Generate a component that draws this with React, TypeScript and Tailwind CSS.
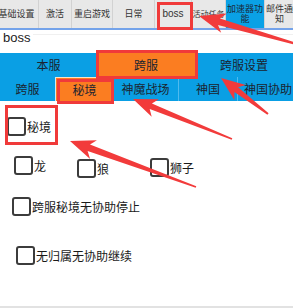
import React from 'react';

type Pt = [number, number];

// builds a tapered annotation arrow polygon from tip to tail
const arrowPoints = (tip: Pt, tail: Pt, headLen = 26, headW = 20, shaftW = 7, tailW = 2) => {
  const dx = tail[0] - tip[0];
  const dy = tail[1] - tip[1];
  const len = Math.hypot(dx, dy);
  const ux = dx / len;
  const uy = dy / len;
  const nx = -uy;
  const ny = ux;
  const bx = tip[0] + ux * headLen;
  const by = tip[1] + uy * headLen;
  const sx = tip[0] + ux * headLen * 0.8;
  const sy = tip[1] + uy * headLen * 0.8;
  const pts: Pt[] = [
    tip,
    [bx + (nx * headW) / 2, by + (ny * headW) / 2],
    [sx + (nx * shaftW) / 2, sy + (ny * shaftW) / 2],
    [tail[0] + (nx * tailW) / 2, tail[1] + (ny * tailW) / 2],
    [tail[0] - (nx * tailW) / 2, tail[1] - (ny * tailW) / 2],
    [sx - (nx * shaftW) / 2, sy - (ny * shaftW) / 2],
    [bx - (nx * headW) / 2, by - (ny * headW) / 2],
  ];
  return pts.map((p) => `${p[0].toFixed(1)},${p[1].toFixed(1)}`).join(' ');
};

const topTabs = [
  { label: '基础设置', w: 'w-[44px]', size: 'text-[9px]' },
  { label: '激活', w: 'w-[33px]', size: 'text-[9px]' },
  { label: '重启游戏', w: 'w-[41px]', size: 'text-[9px]' },
  { label: '日常', w: 'w-[42px]', size: 'text-[9px]' },
  { label: 'boss', w: 'w-[37px]', size: "text-[10px] font-['Liberation_Sans']" },
  { label: '活动任务', w: 'w-[34px]', size: 'text-[8px]' },
  { label: '加速器功能', w: 'w-[39px]', size: 'text-[9px]', active: true, wrap: true },
  { label: '邮件通知', w: 'w-[30px]', size: 'text-[9px]', wrap: true },
];

const CheckBox: React.FC<{ label: string }> = ({ label }) => (
  <div className="flex items-center">
    <div className="w-[19px] h-[19px] border-2 border-[#3c3c3c] rounded-[3px] bg-white shrink-0" />
    <span className="ml-[1px] text-[12px] leading-[14px] text-[#1a1a1a]">{label}</span>
  </div>
);

const App: React.FC = () => {
  return (
    <div className="relative w-[293px] h-[308px] bg-white overflow-hidden flex flex-col border-b-2 border-[#e2e2e2] font-['Noto_Sans_CJK_SC','Noto_Sans',sans-serif]">
      {/* top tab strip, scrolled a little to the left */}
      <div className="h-[30px] bg-[#e8e8e8] border-b-2 border-[#74a3ea] shrink-0">
        <div className="flex h-[28px] ml-[-5px]">
          {topTabs.map((t) => (
            <div
              key={t.label}
              className={`${t.w} ${t.size} shrink-0 h-full flex items-center justify-center text-center leading-[10px] border-r border-[#d2d2d2] ${
                t.wrap ? 'px-[1px]' : 'whitespace-nowrap'
              } ${t.active ? 'bg-[#0aa1e6] text-[#1b2a3a]' : 'text-[#333]'}`}
            >
              {t.label}
            </div>
          ))}
        </div>
      </div>

      {/* group title */}
      <div className="h-[23px] flex items-start shrink-0">
        <span className="pl-[3px] text-[13px] leading-[16px] font-['Liberation_Sans'] text-[#222]">boss</span>
        <div className="flex-1 mt-[4px] ml-[3px] border-t border-[#f0f0f0]" />
      </div>

      {/* first tab row */}
      <div className="flex h-[24px] bg-[#0a9fe4] text-[12px] text-[#1b2430] shrink-0">
        <div className="w-[97px] flex items-center justify-center">本服</div>
        <div className="w-[98px] flex items-center justify-center bg-[#fb7d21]">跨服</div>
        <div className="flex-1 flex items-center justify-center">跨服设置</div>
      </div>

      {/* second tab row */}
      <div className="flex h-[24px] bg-[#0a9fe4] text-[12px] text-[#1b2430] shrink-0 whitespace-nowrap">
        <div className="w-[56px] shrink-0 flex items-center justify-center border-r border-[#cfe9f7]">跨服</div>
        <div className="w-[57px] shrink-0 flex items-center justify-center bg-[#fb7d21] border-t border-[#fde0c8]">秘境</div>
        <div className="w-[66px] shrink-0 flex items-center justify-center border-r border-[#4fbaee]">神魔战场</div>
        <div className="w-[59px] shrink-0 flex items-center justify-center border-r border-[#4fbaee]">神国</div>
        <div className="w-[60px] shrink-0 flex items-center pl-[6px]">神国协助</div>
      </div>

      {/* options */}
      <div className="flex-1 flex flex-col">
        <div className="mt-[16px] pl-[7px]">
          <CheckBox label="秘境" />
        </div>
        <div className="mt-[20px] h-[22px] flex items-start pl-[14px]">
          <div className="w-[63px]">
            <CheckBox label="龙" />
          </div>
          <div className="w-[73px] mt-[3px]">
            <CheckBox label="狼" />
          </div>
          <div className="mt-[2px]">
            <CheckBox label="狮子" />
          </div>
        </div>
        <div className="mt-[19px] pl-[12px]">
          <CheckBox label="跨服秘境无协助停止" />
        </div>
        <div className="mt-[30px] pl-[16px]">
          <CheckBox label="无归属无协助继续" />
        </div>
      </div>

      {/* red annotation boxes */}
      <div className="absolute left-[157px] top-[2px] w-[36px] h-[28px] border-[3px] border-[#f03a3a]" />
      <div className="absolute left-[96px] top-[50px] w-[102px] h-[29px] border-[3px] border-[#f03a3a]" />
      <div className="absolute left-[57px] top-[79px] w-[57px] h-[25px] border-[3px] border-[#f03a3a]" />
      <div className="absolute left-[5px] top-[105px] w-[53px] h-[40px] border-[3px] border-[#f03a3a]" />

      {/* red annotation arrows */}
      <svg className="absolute left-0 top-0 pointer-events-none" width="293" height="308" viewBox="0 0 293 308">
        <polygon points={arrowPoints([199, 16], [300, 45])} fill="#f23b3b" />
        <polygon points={arrowPoints([221, 78], [268, 114], 24, 19, 6, 2)} fill="#f23b3b" />
        <polygon points={arrowPoints([133, 99], [232, 139], 24, 19, 6, 1.5)} fill="#f23b3b" />
        <polygon points={arrowPoints([70, 141], [196, 187], 25, 20, 7, 1.5)} fill="#f23b3b" />
      </svg>
    </div>
  );
};

export default App;
